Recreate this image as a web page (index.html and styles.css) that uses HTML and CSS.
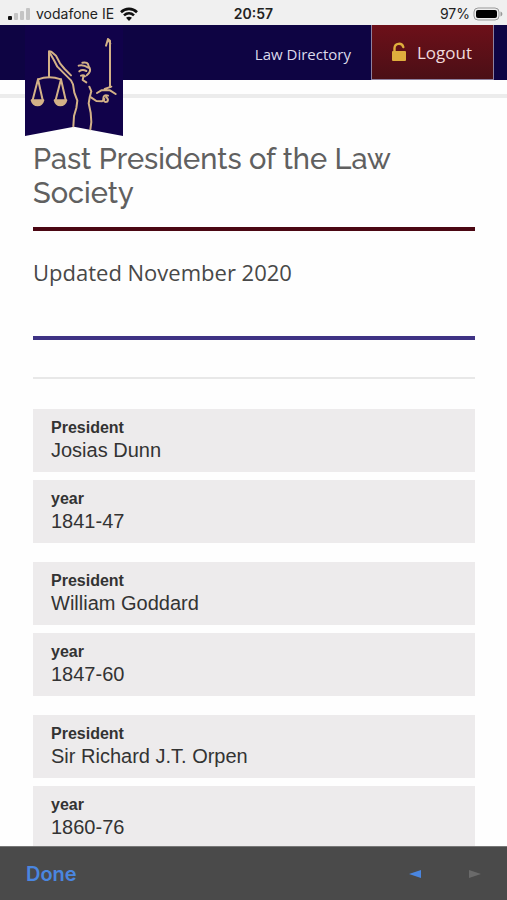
FILE: index.html
```html
<!DOCTYPE html>
<html lang="en">
<head>
    <meta charset="UTF-8">
    <meta name="viewport" content="width=device-width, initial-scale=1">
    <title>Past Presidents of the Law Society</title>
    <link rel="stylesheet" href="styles.css">
</head>
<body>
<div class="status">
    <div class="carrier">
        <svg width="22" height="14" viewBox="0 0 22 14">
            <rect x="0" y="9" width="4" height="4" rx="1" fill="#111"/>
            <rect x="6" y="6" width="4" height="7" rx="1" fill="#c4c4c4"/>
            <rect x="12" y="4" width="4" height="9" rx="1" fill="#c4c4c4"/>
            <rect x="18" y="1" width="4" height="12" rx="1" fill="#c4c4c4"/>
        </svg>
        <span>vodafone IE</span>
        <svg width="18" height="14" viewBox="0 0 18 14" fill="none" stroke="#111" stroke-width="2.6">
            <path d="M1 5.2C5.5 .8 12.5 .8 17 5.2"/>
            <path d="M4 8.4C7 5.6 11 5.6 14 8.4"/>
            <path d="M9 14L6 10.8C7.8 9.3 10.2 9.3 12 10.8Z" fill="#111" stroke="none"/>
        </svg>
    </div>
    <div class="time">20:57</div>
    <div class="battery">
        <span>97%</span>
        <svg width="30" height="14" viewBox="0 0 30 14">
            <rect x="1" y="1" width="25" height="12" rx="4" fill="#eee" stroke="#999"/>
            <rect x="3" y="3" width="21" height="8" rx="2" fill="#000"/>
            <path d="M27.5 4.5C30 5.5 30 8.5 27.5 9.5Z" fill="#999"/>
        </svg>
    </div>
</div>
<header class="header">
    <a class="logo" href="#" aria-label="Law Society home">
        <svg viewBox="15 15 294 333" width="98" height="111">
            <path d="M15 15H309V348L162 320L15 348Z" fill="#11024a"/>
            <g fill="none" stroke="#d3b187" stroke-width="6" stroke-linecap="round" stroke-linejoin="round">
                <path d="M87 172V94L94 95L108 107L120 130L134 147L153 166"/>
                <path d="M88 96L102 121L112 140L132 160L153 181L159 193L163 218L172 242L169 264L162 288L160 319"/>
                <path d="M54 178Q87 165 123 178"/>
                <path d="M54 178L38 240M54 178L68 240M123 178L107 240M123 178L137 240"/>
                <path d="M35 241H70Q66 256 53 256Q39 256 35 241Z" fill="#d3b187"/>
                <path d="M104 241H139Q135 256 121 256Q108 256 104 241Z" fill="#d3b187"/>
                <path d="M187 128Q204 124 206 139Q214 149 207 159L200 166"/>
                <path d="M176 137Q188 132 205 143M178 154Q187 147 199 153M183 167Q191 164 195 169M190 170L188 180L199 187"/>
                <path d="M208 200L214 214L209 232L206 250L212 278L214 306L211 328"/>
                <path d="M213 232L229 243L246 244L253 237"/>
                <path d="M264 227Q251 222 250 235Q251 249 262 245Q267 237 258 231"/>
                <path d="M231 219L244 211H270L287 222M254 207L274 200"/>
                <path d="M270 201V62L264 57L258 77M264 57L271 71"/>
            </g>
        </svg>
    </a>
    <nav class="nav">
        <a class="directory" href="#">Law Directory</a>
        <a class="logout" href="#">
            <svg width="16" height="20" viewBox="0 0 16 20">
                <path d="M3.5 10V6A4.5 4.5 0 0 1 12.3 5" fill="none" stroke="#dfae3d" stroke-width="2.4" stroke-linecap="round"/>
                <rect x="1" y="9" width="14" height="10" rx="1" fill="#dfae3d"/>
            </svg>
            <span>Logout</span>
        </a>
    </nav>
</header>
<main class="content">
    <h1>Past Presidents of the Law Society</h1>
    <p class="updated">Updated November 2020</p>
    <table class="presidents">
        <tbody>
        <tr>
            <td><b>President</b>Josias Dunn</td>
            <td><b>year</b>1841-47</td>
        </tr>
        <tr>
            <td><b>President</b>William Goddard</td>
            <td><b>year</b>1847-60</td>
        </tr>
        <tr>
            <td><b>President</b>Sir Richard J.T. Orpen</td>
            <td><b>year</b>1860-76</td>
        </tr>
        </tbody>
    </table>
</main>
<footer class="toolbar">
    <button class="done" type="button">Done</button>
    <div class="arrows">
        <button type="button" aria-label="Back">
            <svg width="12" height="8" viewBox="0 0 12 8"><path d="M0 4L12 0V8Z" fill="#4a86e0"/></svg>
        </button>
        <button type="button" aria-label="Forward" disabled>
            <svg width="12" height="8" viewBox="0 0 12 8"><path d="M12 4L0 0V8Z" fill="#6a6a6a"/></svg>
        </button>
    </div>
</footer>
</body>
</html>
```
FILE: styles.css
```css
*{
    box-sizing: border-box;
    margin: 0;
    padding: 0;
}
body{
    display: flex;
    flex-direction: column;
    height: 100vh;
    background: #fefefe;
    color: #333;
    font-family: "Liberation Sans", Arial, sans-serif;
}
svg{
    display: block;
}
a{
    text-decoration: none;
}
button{
    border: 0;
    background: none;
    font: inherit;
}

/* status bar */
.status{
    display: grid;
    grid-template-columns: 1fr auto 1fr;
    align-items: center;
    flex: none;
    height: 25px;
    padding: 2px 8px 0 8px;
    background: #f0f0f0;
    color: #222;
    font-family: Inter, sans-serif;
    font-size: 14px;
}
.carrier, .battery{
    display: flex;
    align-items: center;
    gap: 6px;
}
.battery{
    justify-content: flex-end;
    gap: 3px;
    margin-right: -4px;
}
.time{
    font-weight: 600;
}

/* header */
.header{
    position: relative;
    flex: none;
    height: 73px;
    border-bottom: 4px solid #ececec;
}
.logo{
    position: absolute;
    top: 0;
    left: 25px;
}
.nav{
    display: flex;
    justify-content: flex-end;
    height: 55px;
    padding-right: 13px;
    background: #0e0443;
    font-family: "Open Sans", sans-serif;
}
.nav a{
    display: flex;
    align-items: center;
}
.directory{
    padding: 3px 20px 0 0;
    color: #dcdaea;
    font-size: 15px;
}
.logout{
    gap: 10px;
    padding: 0 21px 0 19px;
    border: solid #8d819f;
    border-width: 0 1px 1px;
    background: linear-gradient(#6d1019, #4b0f16);
    color: #f0d9dc;
    font-size: 17px;
}

/* page */
.content{
    flex: 1;
    min-height: 0;
    padding: 44px 32px 0 33px;
    overflow-y: auto;
    scrollbar-width: none;
}
h1{
    padding-bottom: 17px;
    border-bottom: 4px solid #4b0713;
    color: #606060;
    font: 500 29px/34px Raleway, Lato, sans-serif;
}
.updated{
    padding: 26px 0 49px;
    border-bottom: 4px solid #3e3284;
    color: #484848;
    font: 22px/30px "Open Sans", sans-serif;
}
.presidents{
    display: block;
    margin-top: 37px;
    padding-top: 30px;
    border-top: 2px solid #e8e8e8;
}
.presidents tbody{
    display: grid;
    gap: 19px;
}
.presidents tr{
    display: grid;
    gap: 8px;
}
.presidents td{
    display: block;
    height: 63px;
    padding: 9px 18px;
    background: #edebec;
    font-size: 20px;
    line-height: 24px;
}
.presidents b{
    display: block;
    font-size: 16px;
    line-height: 20px;
}

/* bottom bar */
.toolbar{
    display: flex;
    align-items: center;
    justify-content: space-between;
    flex: none;
    height: 54px;
    padding: 0 26px;
    border-top: 1px solid #777;
    background: #4a4a4a;
}
.done{
    color: #4a86e0;
    font: 600 20px/24px Inter, sans-serif;
}
.arrows{
    display: flex;
    gap: 48px;
}
```
